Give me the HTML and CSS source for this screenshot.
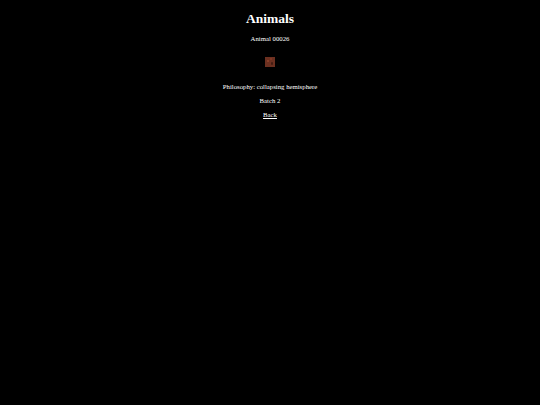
FILE: index.html
```html
<!DOCTYPE html>
<html>
<head>
<meta charset="utf-8">
<title>Animals</title>
<link rel="stylesheet" href="styles.css">
</head>
<body>
<main class="page">
  <h1 class="title">Animals</h1>
  <p class="line">Animal 00026</p>
  <div class="thumb"></div>
  <p class="line">Philosophy: collapsing hemisphere</p>
  <p class="line">Batch 2</p>
  <p class="line"><a class="back" href="#">Back</a></p>
</main>
</body>
</html>
```

FILE: styles.css
```css
html, body {
  margin: 0;
  padding: 0;
  background: #000;
}
body {
  color: #fff;
  font-family: "Liberation Serif", "Times New Roman", serif;
}
.page {
  display: flow-root;
  text-align: center;
}
.title {
  font-size: 13.5px;
  line-height: 15px;
  font-weight: bold;
  margin: 10.8px 0 9.2px;
}
.line {
  font-size: 6.75px;
  line-height: 7.5px;
  margin: 6.5px 0;
}
.thumb {
  width: 10px;
  height: 10px;
  margin: 14.6px auto 16.4px;
  background-color: #6c3020;
  background-image:
    radial-gradient(circle at 30% 40%, rgba(150,70,45,0.7) 0 1px, transparent 1.5px),
    radial-gradient(circle at 70% 65%, rgba(40,15,10,0.6) 0 1px, transparent 1.5px),
    radial-gradient(circle at 60% 20%, rgba(140,60,40,0.6) 0 1px, transparent 1.5px);
}
.back {
  color: #fff;
  text-decoration: underline;
}
```
